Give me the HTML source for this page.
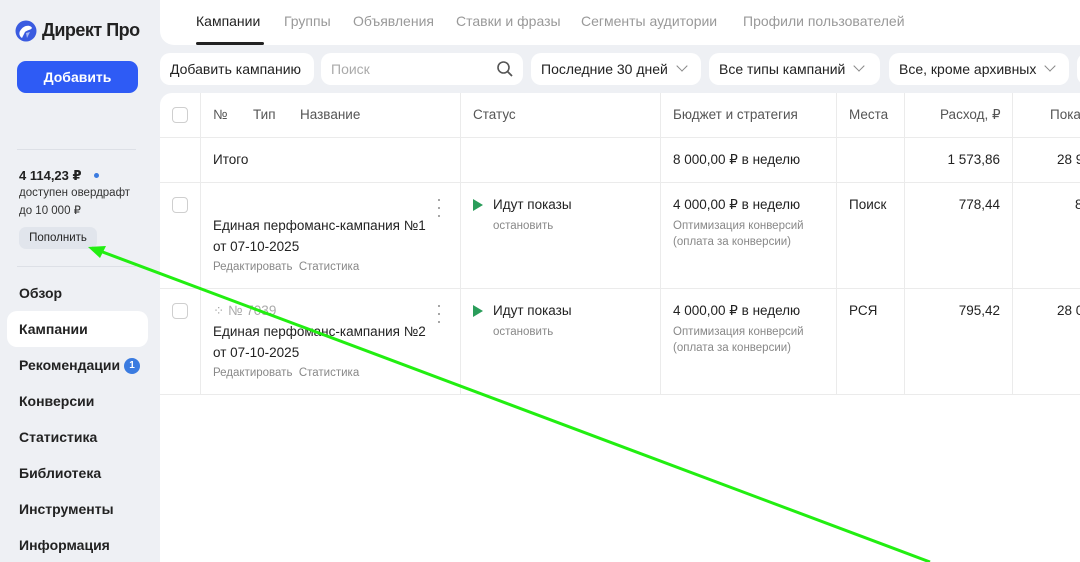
<!DOCTYPE html>
<html><head><meta charset="utf-8"><style>
*{box-sizing:border-box;margin:0;padding:0}
body{width:1080px;height:562px;overflow:hidden;background:#eef0f4;font-family:"Liberation Sans","DejaVu Sans",sans-serif;color:#222;position:relative;font-size:13.5px}
.abs{position:absolute;white-space:nowrap}
.tabs{position:absolute;left:160px;top:0;width:920px;height:45px;background:#fff;border-radius:0 0 0 14px}
.tab{position:absolute;top:13px;font-size:14px;color:#999}
.pill{position:absolute;top:53px;height:32px;background:#fff;border-radius:10px;font-size:14px;padding:8px 10px;color:#222;white-space:nowrap}
.chev{display:inline-block;width:8px;height:8px;border-right:1.5px solid #888;border-bottom:1.5px solid #888;transform:rotate(45deg);margin-left:10px;position:relative;top:-4px}
.table{position:absolute;left:160px;top:93px;width:920px;height:469px;background:#fff;border-radius:12px 0 0 0}
.vl{position:absolute;width:1px;background:#ebebeb}
.hl{position:absolute;height:1px;background:#ebebeb;left:0;width:920px}
.cb{position:absolute;width:16px;height:16px;border:1px solid #cfcfcf;border-radius:4px}
.t{position:absolute;white-space:nowrap;font-size:13.5px}
.g{color:#888;font-size:11.5px}
.nav{position:absolute;left:19px;font-size:14px;font-weight:bold;color:#222}
</style></head><body>
<svg class="abs" style="left:15px;top:20px" width="22" height="22" viewBox="0 0 22 22"><circle cx="11" cy="11" r="10.5" fill="#3a5be0"/><path d="M5 11 C9 4 16 5 17 8 C16 10 12 10 10 12 L7 18 C4 16 4 13 5 11Z" fill="#fff"/><path d="M11 13 L15 12 L12 18 Z" fill="#a9b8f2"/></svg>
<div class="abs" style="left:42px;top:20px;font-size:18px;font-weight:bold;color:#222;letter-spacing:-0.5px">Директ Про</div>
<div class="abs" style="left:17px;top:61px;width:121px;height:32px;background:#2e5bf5;border-radius:9px;color:#fff;font-size:14px;font-weight:bold;text-align:center;line-height:32px">Добавить</div>
<div class="abs" style="left:17px;top:149px;width:119px;height:1px;background:#dde0e6"></div>
<div class="abs" style="left:19px;top:168px;font-size:13px;font-weight:bold">4 114,23 ₽</div>
<div class="abs" style="left:94px;top:173px;width:5px;height:5px;border-radius:50%;background:#3a7be0"></div>
<div class="abs" style="left:19px;top:187px;font-size:11.5px;color:#333">доступен овердрафт</div>
<div class="abs" style="left:19px;top:203px;font-size:11.5px;color:#333">до 10 000 ₽</div>
<div class="abs" style="left:19px;top:227px;width:78px;height:22px;background:#e1e5ec;border-radius:7px;font-size:11.5px;text-align:center;line-height:22px">Пополнить</div>
<div class="abs" style="left:17px;top:266px;width:119px;height:1px;background:#dde0e6"></div>
<div class="nav" style="top:285px">Обзор</div>
<div class="abs" style="left:7px;top:311px;width:141px;height:36px;background:#fff;border-radius:10px"></div>
<div class="nav" style="top:321px">Кампании</div>
<div class="nav" style="top:357px">Рекомендации</div>
<div class="abs" style="left:124px;top:358px;width:16px;height:16px;border-radius:50%;background:#3a7be0;color:#fff;font-size:10px;font-weight:bold;text-align:center;line-height:16px">1</div>
<div class="nav" style="top:393px">Конверсии</div>
<div class="nav" style="top:429px">Статистика</div>
<div class="nav" style="top:465px">Библиотека</div>
<div class="nav" style="top:501px">Инструменты</div>
<div class="nav" style="top:537px">Информация</div>
<div class="tabs">
<div class="tab" style="left:36px;color:#222">Кампании</div>
<div class="abs" style="left:36px;top:42px;width:68px;height:3px;background:#222;border-radius:2px"></div>
<div class="tab" style="left:124px">Группы</div>
<div class="tab" style="left:193px">Объявления</div>
<div class="tab" style="left:296px">Ставки и фразы</div>
<div class="tab" style="left:421px">Сегменты аудитории</div>
<div class="tab" style="left:583px">Профили пользователей</div>
</div>
<div class="pill" style="left:160px;width:154px">Добавить кампанию</div>
<div class="pill" style="left:321px;width:202px;color:#aaa">Поиск
<svg style="position:absolute;right:9px;top:7px" width="18" height="18" viewBox="0 0 18 18"><circle cx="7.5" cy="7.5" r="5.5" fill="none" stroke="#555" stroke-width="1.6"/><path d="M11.5 11.5 L16 16" stroke="#555" stroke-width="1.8"/></svg></div>
<div class="pill" style="left:531px;width:170px">Последние 30 дней<span class="chev"></span></div>
<div class="pill" style="left:709px;width:171px">Все типы кампаний<span class="chev"></span></div>
<div class="pill" style="left:889px;width:180px">Все, кроме архивных<span class="chev"></span></div>
<div class="pill" style="left:1077px;width:20px;padding:0"></div>
<div class="table">
<div class="hl" style="top:44px"></div>
<div class="hl" style="top:89px"></div>
<div class="hl" style="top:195px"></div>
<div class="hl" style="top:301px"></div>
<div class="vl" style="left:40px;top:0;height:302px"></div>
<div class="vl" style="left:300px;top:0;height:302px"></div>
<div class="vl" style="left:500px;top:0;height:302px"></div>
<div class="vl" style="left:676px;top:0;height:302px"></div>
<div class="vl" style="left:744px;top:0;height:302px"></div>
<div class="vl" style="left:852px;top:0;height:302px"></div>
<div class="cb" style="left:12px;top:14px"></div>
<div class="t" style="left:53px;top:14px;color:#555">№</div>
<div class="t" style="left:93px;top:14px;color:#555">Тип</div>
<div class="t" style="left:140px;top:14px;color:#555">Название</div>
<div class="t" style="left:313px;top:14px;color:#555">Статус</div>
<div class="t" style="left:513px;top:14px;color:#555">Бюджет и стратегия</div>
<div class="t" style="left:689px;top:14px;color:#555">Места</div>
<div class="t" style="left:780px;top:14px;color:#555">Расход, ₽</div>
<div class="t" style="left:890px;top:14px;color:#555">Пока</div>
<div class="t" style="left:53px;top:59px">Итого</div>
<div class="t" style="left:513px;top:59px">8 000,00 ₽ в неделю</div>
<div class="t" style="left:767px;top:59px;width:73px;text-align:right">1 573,86</div>
<div class="t" style="left:897px;top:59px">28 9</div>
<div class="cb" style="left:12px;top:104px"></div>
<div class="t" style="left:276px;top:102px;color:#999;font-size:18px;line-height:8px">·<br>·<br>·</div>
<div class="t" style="left:53px;top:125px">Единая перфоманс-кампания №1</div>
<div class="t" style="left:53px;top:146px">от 07-10-2025</div>
<div class="t g" style="left:53px;top:168px">Редактировать&nbsp; Статистика</div>
<svg class="abs" style="left:313px;top:106px" width="10" height="12"><path d="M0 0 L10 6 L0 12Z" fill="#2a9d5a"/></svg>
<div class="t" style="left:333px;top:104px">Идут показы</div>
<div class="t g" style="left:333px;top:127px">остановить</div>
<div class="t" style="left:513px;top:104px">4 000,00 ₽ в неделю</div>
<div class="t g" style="left:513px;top:127px">Оптимизация конверсий</div>
<div class="t g" style="left:513px;top:143px">(оплата за конверсии)</div>
<div class="t" style="left:689px;top:104px">Поиск</div>
<div class="t" style="left:767px;top:104px;width:73px;text-align:right">778,44</div>
<div class="t" style="left:915px;top:104px">8</div>
<div class="cb" style="left:12px;top:210px"></div>
<div class="t" style="left:276px;top:208px;color:#999;font-size:18px;line-height:8px">·<br>·<br>·</div>
<div class="t" style="left:53px;top:210px;font-size:13.5px;color:#aaa">⁘ № 7039</div>
<div class="t" style="left:53px;top:231px">Единая перфоманс-кампания №2</div>
<div class="t" style="left:53px;top:252px">от 07-10-2025</div>
<div class="t g" style="left:53px;top:274px">Редактировать&nbsp; Статистика</div>
<svg class="abs" style="left:313px;top:212px" width="10" height="12"><path d="M0 0 L10 6 L0 12Z" fill="#2a9d5a"/></svg>
<div class="t" style="left:333px;top:210px">Идут показы</div>
<div class="t g" style="left:333px;top:233px">остановить</div>
<div class="t" style="left:513px;top:210px">4 000,00 ₽ в неделю</div>
<div class="t g" style="left:513px;top:233px">Оптимизация конверсий</div>
<div class="t g" style="left:513px;top:249px">(оплата за конверсии)</div>
<div class="t" style="left:689px;top:210px">РСЯ</div>
<div class="t" style="left:767px;top:210px;width:73px;text-align:right">795,42</div>
<div class="t" style="left:897px;top:210px">28 0</div>
</div>
<svg class="abs" style="left:0;top:0" width="1080" height="562"><path d="M930 562 L92 248" stroke="#22ee11" stroke-width="3"/><path d="M88 247 L106 246 L100 258 Z" fill="#22ee11"/></svg>
</body></html>
